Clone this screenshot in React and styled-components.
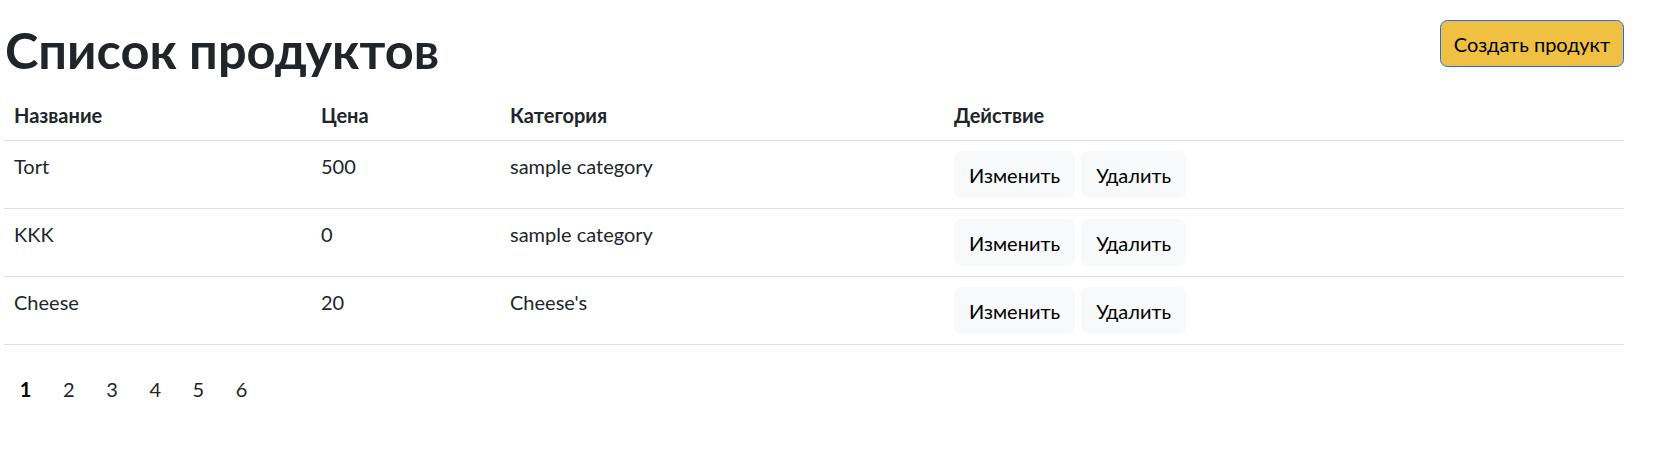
import React from "react";
import styled, { createGlobalStyle } from "styled-components";

const GlobalStyle = createGlobalStyle`
  *, *::before, *::after { box-sizing: border-box; }
  body {
    margin: 0;
    background: #ffffff;
    color: #212529;
    font-family: Lato, "Noto Sans", sans-serif;
    font-size: 20px;
    line-height: 30px;
  }
`;

const Page = styled.div`
  padding: 20px 48px 0 4px;
`;

const Header = styled.div`
  display: flex;
  justify-content: space-between;
  align-items: flex-start;
`;

const Title = styled.h1`
  margin: 0 0 10px 1px;
  font-size: 50.5px;
  line-height: 60px;
  font-weight: 700;
  color: #212529;
`;

const Button = styled.button`
  display: inline-flex;
  align-items: center;
  justify-content: center;
  height: 47px;
  padding: 0 14px;
  font-family: inherit;
  font-size: 20px;
  line-height: 30px;
  color: #000000;
  border-radius: 7.5px;
  cursor: pointer;
  background: ${(p) => (p.$variant === "warning" ? "#f0c043" : "#f8f9fa")};
  border: 1px solid ${(p) => (p.$variant === "warning" ? "#1a6ef5" : "#f8f9fa")};
  margin-right: ${(p) => (p.$spaced ? "6px" : "0")};
`;

const CreateButton = styled(Button)`
  padding: 0 13px;
  min-width: 184px;
`;

const Table = styled.table`
  width: 100%;
  border-collapse: collapse;
  table-layout: fixed;
`;

const Th = styled.th`
  text-align: left;
  font-weight: 700;
  padding: 10px 10px;
  line-height: 30px;
  vertical-align: top;
  border-bottom: 1px solid #dee2e6;
  color: #212529;
`;

const Td = styled.td`
  text-align: left;
  padding: 10px 10px;
  line-height: 30px;
  vertical-align: top;
  border-bottom: 1px solid #dee2e6;
  color: #212529;
`;

const Actions = styled.div`
  display: flex;
  align-items: center;
`;

const Pagination = styled.ul`
  display: flex;
  list-style: none;
  margin: 29px 0 0 0;
  padding: 0;
`;

const PageItem = styled.li`
  padding: 0 15.8px;
  font-size: 20px;
  line-height: 30px;
  font-weight: ${(p) => (p.$active ? 700 : 400)};
  color: ${(p) => (p.$active ? "#000000" : "#212529")};
  cursor: pointer;
`;

const products = [
  { name: "Tort", price: "500", category: "sample category" },
  { name: "KKK", price: "0", category: "sample category" },
  { name: "Cheese", price: "20", category: "Cheese's" },
];

export default function App() {
  return (
    <>
      <GlobalStyle />
      <Page>
        <Header>
          <Title>Список продуктов</Title>
          <CreateButton $variant="warning">Создать продукт</CreateButton>
        </Header>
        <Table>
          <colgroup>
            <col style={{ width: "307px" }} />
            <col style={{ width: "189px" }} />
            <col style={{ width: "444px" }} />
            <col />
          </colgroup>
          <thead>
            <tr>
              <Th>Название</Th>
              <Th>Цена</Th>
              <Th>Категория</Th>
              <Th>Действие</Th>
            </tr>
          </thead>
          <tbody>
            {products.map((p) => (
              <tr key={p.name}>
                <Td>{p.name}</Td>
                <Td>{p.price}</Td>
                <Td>{p.category}</Td>
                <Td>
                  <Actions>
                    <Button $spaced>Изменить</Button>
                    <Button>Удалить</Button>
                  </Actions>
                </Td>
              </tr>
            ))}
          </tbody>
        </Table>
        <Pagination>
          {[1, 2, 3, 4, 5, 6].map((n) => (
            <PageItem key={n} $active={n === 1}>
              {n}
            </PageItem>
          ))}
        </Pagination>
      </Page>
    </>
  );
}
